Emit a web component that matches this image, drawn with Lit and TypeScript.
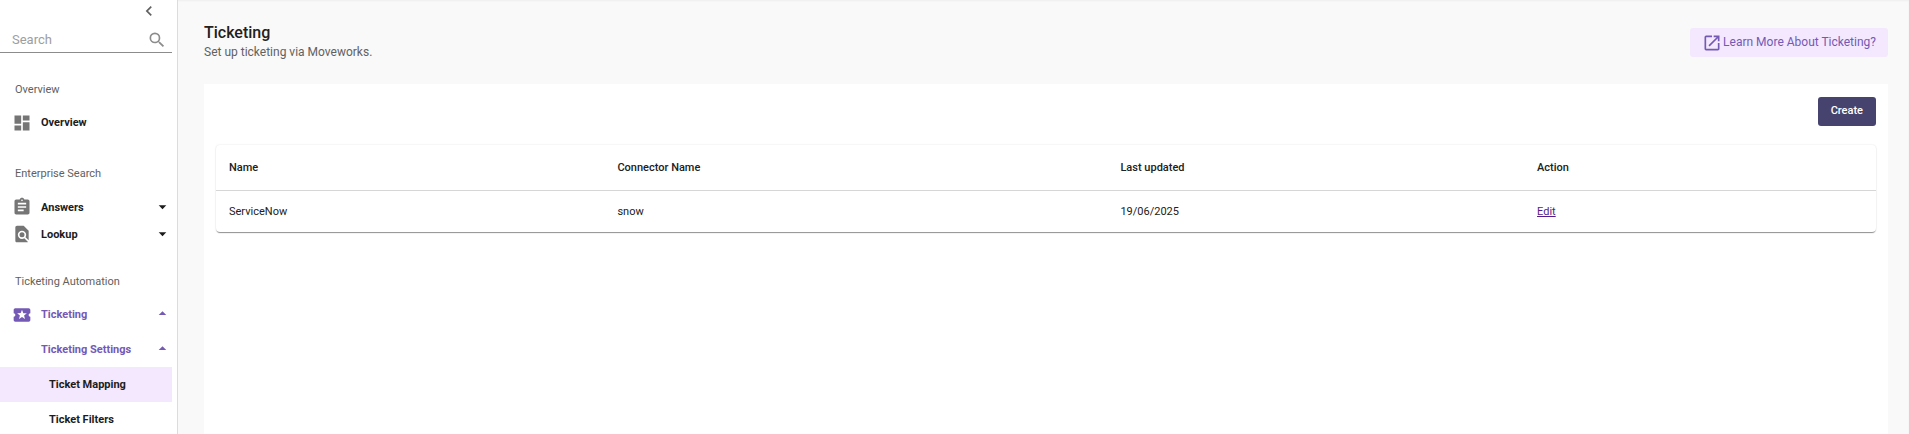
import { LitElement, html, css, svg, nothing } from "lit";
import { customElement, property } from "lit/decorators.js";

const icons: Record<string, unknown> = {
  chevron: svg`<path d="M15.41 7.41 14 6l-6 6 6 6 1.41-1.41L10.83 12z"/>`,
  search: svg`<path d="M15.5 14h-.79l-.28-.27A6.47 6.47 0 0 0 16 9.5 6.5 6.5 0 1 0 9.5 16c1.61 0 3.09-.59 4.23-1.57l.27.28v.79l5 4.99L20.49 19zm-6 0a4.5 4.5 0 1 1 0-9 4.5 4.5 0 0 1 0 9z"/>`,
  dashboard: svg`<path d="M3 13h8V3H3zm0 8h8v-6H3zm10 0h8V11h-8zm0-18v6h8V3z"/>`,
  assignment: svg`<path d="M19 3h-4.18C14.4 1.84 13.3 1 12 1s-2.4.84-2.82 2H5c-1.1 0-2 .9-2 2v14c0 1.1.9 2 2 2h14c1.1 0 2-.9 2-2V5c0-1.1-.9-2-2-2zm-7 0a1 1 0 1 1 0 2 1 1 0 0 1 0-2zm2 14H7v-2h7zm3-4H7v-2h10zm0-4H7V7h10z"/>`,
  lookup: svg`<path d="M20 19.59V8l-6-6H6c-1.1 0-2 .9-2 2v16c0 1.1.89 2 1.99 2H18c.45 0 .85-.15 1.19-.4l-4.43-4.43c-.8.52-1.74.83-2.76.83a5 5 0 1 1 5-5c0 1.02-.31 1.96-.83 2.75zM9 13a3 3 0 1 0 6 0 3 3 0 0 0-6 0z"/>`,
  ticket: svg`<path d="M20 12c0-1.1.9-2 2-2V6c0-1.1-.9-2-2-2H4c-1.1 0-1.99.9-1.99 2v4c1.1 0 1.99.9 1.99 2s-.89 2-2 2v4c0 1.1.9 2 2 2h16c1.1 0 2-.9 2-2v-4c-1.1 0-2-.9-2-2zm-4.42 4.8L12 14.5l-3.58 2.3 1.08-4.12-3.29-2.69 4.24-.25L12 5.8l1.54 3.95 4.24.25-3.29 2.69z"/>`,
  open: svg`<path d="M19 19H5V5h7V3H5a2 2 0 0 0-2 2v14a2 2 0 0 0 2 2h14c1.1 0 2-.9 2-2v-7h-2zM14 3v2h3.59l-9.83 9.83 1.41 1.41L19 6.41V10h2V3z"/>`,
  down: svg`<path d="M5 8l7 7 7-7z"/>`,
  up: svg`<path d="M5 13l7-7 7 7z"/>`,
};

@customElement("ui-icon")
class UiIcon extends LitElement {
  @property() name = "";
  static styles = css`
    :host { display: block; flex: none; width: 20px; height: 20px; }
    .glyph { display: block; width: 100%; height: 100%; fill: currentColor; }
  `;
  render() {
    return html`<svg class="glyph" viewBox="0 0 24 24" aria-hidden="true">${icons[this.name]}</svg>`;
  }
}

interface NavItem {
  label: string;
  icon?: string;
  arrow?: "up" | "down";
  kind?: string;
}

const sections: { title: string; dense?: boolean; items: NavItem[] }[] = [
  { title: "Overview", items: [{ label: "Overview", icon: "dashboard" }] },
  {
    title: "Enterprise Search",
    dense: true,
    items: [
      { label: "Answers", icon: "assignment", arrow: "down" },
      { label: "Lookup", icon: "lookup", arrow: "down" },
    ],
  },
  {
    title: "Ticketing Automation",
    items: [
      { label: "Ticketing", icon: "ticket", arrow: "up", kind: "active" },
      { label: "Ticketing Settings", arrow: "up", kind: "active" },
      { label: "Ticket Mapping", kind: "leaf selected" },
      { label: "Ticket Filters", kind: "leaf" },
    ],
  },
];

@customElement("side-nav")
class SideNav extends LitElement {
  static styles = css`
    :host {
      display: block; box-sizing: border-box; overflow: hidden; background: #fff;
      border-right: 1px solid #dcdcdc; padding-right: 5px;
    }
    .collapse {
      display: block; margin: 1px 13px 0 auto; padding: 0; border: 0;
      background: none; color: #616161; cursor: pointer;
    }
    .search {
      display: flex; align-items: center; padding: 9px 5px 2px 12px;
      border-bottom: 1px solid #8c8c8c; color: #8c8c8c;
    }
    .field {
      flex: 1; min-width: 0; padding: 0; border: 0; outline: 0; background: none;
      font: 400 13px/20px Roboto, sans-serif; color: #212121;
    }
    .field::placeholder { color: #9e9e9e; opacity: 1; }
    .nav { padding-top: 3px; }
    .group { padding-top: 20px; }
    .title { margin: 0; padding: 4px 15px; font: 400 11px/20px Roboto, sans-serif; color: #616161; }
    .list { margin: 1px 0 0; padding: 0; list-style: none; }
    .item {
      display: flex; align-items: center; height: 35px; padding: 0 3px 0 12px;
      font: 700 11px/20px Roboto, sans-serif; color: #1c1c1c; text-decoration: none;
    }
    .dense { margin-top: 6px; }
    .dense .item { height: 27px; }
    .dense .slot { padding-bottom: 2px; }
    .slot { width: 29px; color: #757575; }
    .name { flex: 1; }
    .leaf { padding-left: 20px; }
    .active, .active .slot { color: #7459b5; }
    .selected { background: #f3e8fd; }
    .arrow { width: 13px; height: 13px; }
  `;
  render() {
    return html`
      <button class="collapse" aria-label="Collapse menu"><ui-icon name="chevron"></ui-icon></button>
      <div class="search">
        <input class="field" type="search" placeholder="Search" aria-label="Search" />
        <ui-icon name="search"></ui-icon>
      </div>
      <nav class="nav">
        ${sections.map(
          (s) => html`<section class="group">
            <h2 class="title">${s.title}</h2>
            <ul class="list ${s.dense ? "dense" : ""}">
              ${s.items.map(
                (i) => html`<li>
                  <a class="item ${i.kind ?? ""}" href="#">
                    <span class="slot">${i.icon ? html`<ui-icon name=${i.icon}></ui-icon>` : nothing}</span>
                    <span class="name">${i.label}</span>
                    ${i.arrow ? html`<ui-icon class="arrow" name=${i.arrow}></ui-icon>` : nothing}
                  </a>
                </li>`
              )}
            </ul>
          </section>`
        )}
      </nav>
    `;
  }
}

const rows = [{ name: "ServiceNow", connector: "snow", updated: "19/06/2025" }];

@customElement("app-root")
class AppRoot extends LitElement {
  static styles = css`
    :host {
      display: grid; grid-template-columns: 178px minmax(0, 1fr); height: 100vh;
      overflow: hidden; background: #f9f9f9; color: #212121;
      font-family: Roboto, sans-serif; box-shadow: inset 0 1px 2px #eeeeee;
    }
    .main { display: flex; flex-direction: column; padding: 21px 21px 0 26px; }
    .head { display: flex; justify-content: space-between; align-items: flex-start; height: 63px; }
    .heading { margin: 0; font: 500 16px/24px Roboto, sans-serif; }
    .sub { margin: 0; font-size: 12px; line-height: 14px; color: #616161; }
    .learn {
      display: flex; align-items: center; height: 29px; margin-top: 7px;
      padding: 0 12px; border-radius: 3px; background: #f3e8fd; color: #7459b5;
      font-size: 12px; line-height: 16px; text-decoration: none;
    }
    .caption { padding: 0 0 2px 1px; }
    .panel { flex: 1; padding: 13px 12px 0; background: #fff; }
    .bar { display: flex; justify-content: flex-end; padding-bottom: 19px; }
    .create {
      height: 29px; padding: 0 13px 2px; border: 0; border-radius: 3px; background: #46446e;
      color: #fff; font: 500 11px/16px Roboto, sans-serif; cursor: pointer;
    }
    .table {
      width: 100%; table-layout: fixed; border-collapse: separate; border-spacing: 0;
      border-radius: 4px; font-size: 11px; line-height: 16px; text-align: left;
      box-shadow: 0 2px 1px -1px rgba(0, 0, 0, 0.3), 0 1px 1px rgba(0, 0, 0, 0.16), 0 0 2px rgba(0, 0, 0, 0.12);
    }
    .th, .td { box-sizing: border-box; padding: 0 13px; }
    .th { height: 46px; border-bottom: 1px solid #d6d6d6; font-weight: 500; }
    .td { height: 41px; }
    .c1 { width: 23.4%; }
    .c2 { width: 30.3%; }
    .c3 { width: 25.1%; }
    .edit { color: #551a8b; }
  `;
  render() {
    return html`
      <side-nav></side-nav>
      <main class="main">
        <header class="head">
          <div>
            <h1 class="heading">Ticketing</h1>
            <p class="sub">Set up ticketing via Moveworks.</p>
          </div>
          <a class="learn" href="#"><ui-icon name="open"></ui-icon><span class="caption">Learn More About Ticketing?</span></a>
        </header>
        <section class="panel">
          <div class="bar"><button class="create">Create</button></div>
          <table class="table">
            <thead>
              <tr>
                <th class="th c1">Name</th>
                <th class="th c2">Connector Name</th>
                <th class="th c3">Last updated</th>
                <th class="th">Action</th>
              </tr>
            </thead>
            <tbody>
              ${rows.map(
                (r) => html`<tr>
                  <td class="td">${r.name}</td>
                  <td class="td">${r.connector}</td>
                  <td class="td">${r.updated}</td>
                  <td class="td"><a class="edit" href="#">Edit</a></td>
                </tr>`
              )}
            </tbody>
          </table>
        </section>
      </main>
    `;
  }
}
